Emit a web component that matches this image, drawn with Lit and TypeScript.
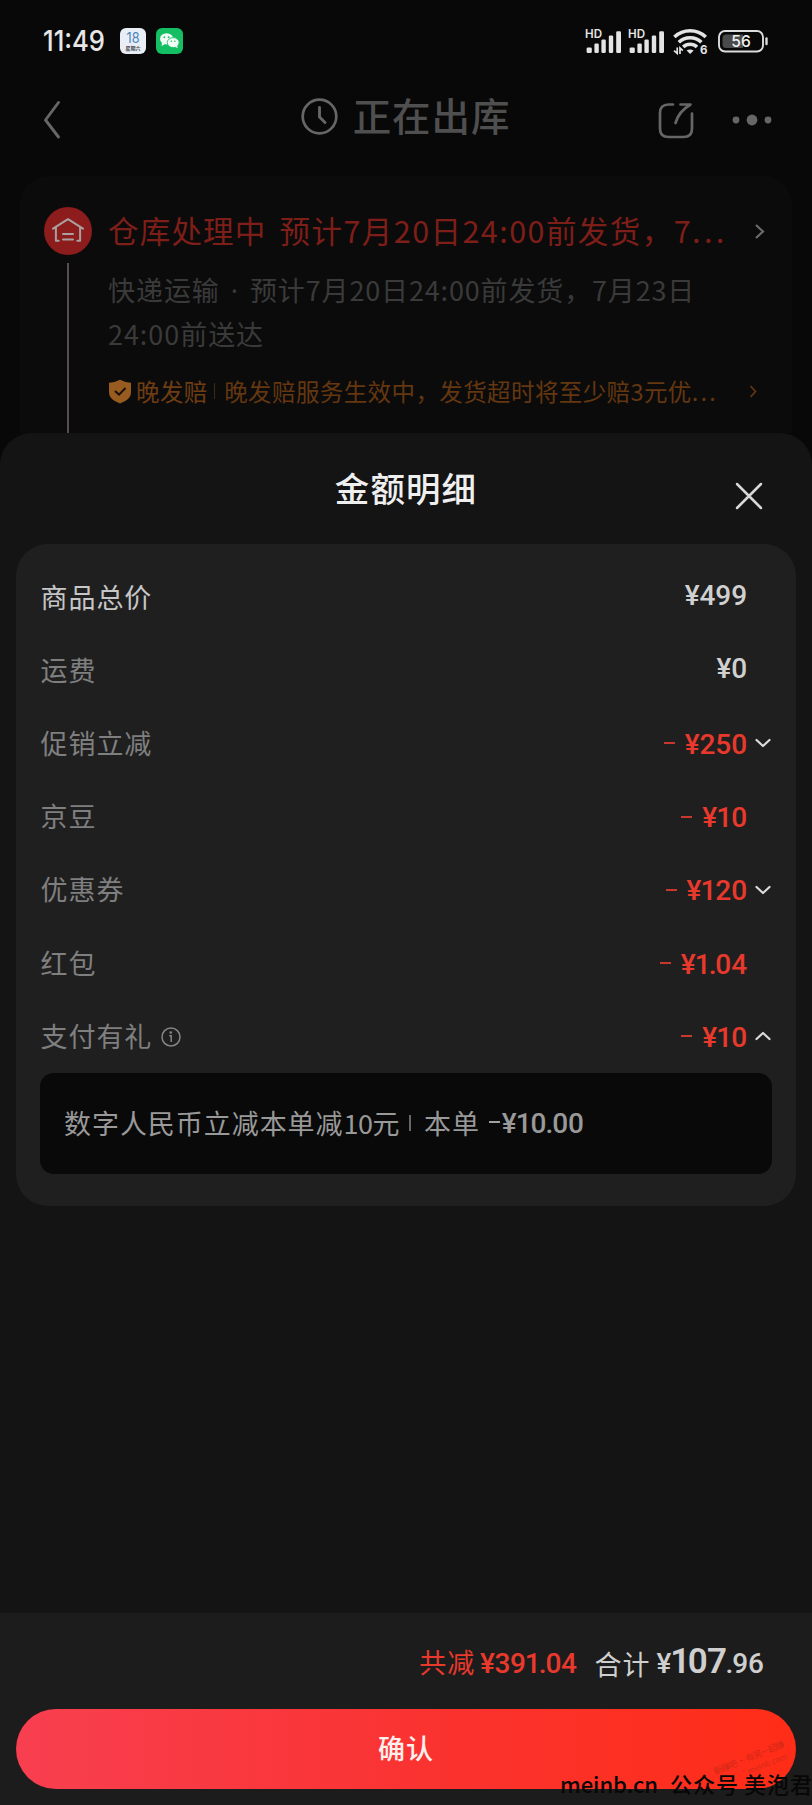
import { LitElement, html, svg, css, nothing } from "lit";
import { customElement, property } from "lit/decorators.js";

interface Row {
  label: string;
  amount: string;
  minus?: boolean;
  chevron?: "down" | "up";
  strong?: boolean;
  info?: boolean;
}

const ROWS: Row[] = [
  { label: "商品总价", amount: "¥499", strong: true },
  { label: "运费", amount: "¥0" },
  { label: "促销立减", amount: "¥250", minus: true, chevron: "down" },
  { label: "京豆", amount: "¥10", minus: true },
  { label: "优惠券", amount: "¥120", minus: true, chevron: "down" },
  { label: "红包", amount: "¥1.04", minus: true },
  { label: "支付有礼", amount: "¥10", minus: true, chevron: "up", info: true },
];

/* Figures with a tightened "1" and decimal point. */
const figures = (value: string) =>
  html`<span>${[...value].map((c) => (c === "1" || c === "." ? html`<span class="thin">${c}</span>` : c))}</span>`;

const figureStyles = css`
  .thin { margin-left: -.800px; letter-spacing: -1.100px; }
`;

const signal = html`<svg class="signal" width="38" height="26" viewBox="0 0 38 26">
  <text x="0" y="10.4" font-size="11.8" font-weight="600" textLength="17" lengthAdjust="spacingAndGlyphs" fill="#e4e4e4">HD</text>
  ${[
    [1.6, 19.4, 5.2],
    [9.4, 15.4, 4.4],
    [16.4, 11.4, 4.4],
    [23.8, 7.4, 4.4],
    [31.2, 3.2, 4.8],
  ].map(([x, y, w]) => svg`<rect x=${x} y=${y} width=${w} height=${25 - y} rx="1.3" fill="#e4e4e4" />`)}
</svg>`;

@customElement("status-bar")
export class StatusBar extends LitElement {
  static styles = css`
    :host { display: flex; height: 82px; box-sizing: border-box; padding: 0 0 0 43px; align-items: center; }
    .time { width: 64px; font-family: "Inter", sans-serif; }
    .apps { display: flex; gap: 10px; margin-left: 13px; flex: 1; }
    .right { display: flex; align-items: center; margin-right: 43px; }
    .signal { margin-right: 5px; font-family: "Inter", sans-serif; }
    .wifi { margin: 0 10px 0 2px; font-family: "Inter", sans-serif; }
    .battery { font-family: "Inter", sans-serif; }
    svg { display: block; overflow: visible; }
  `;
  render() {
    return html`
      <svg class="time" width="64" height="30" viewBox="0 0 64 30"><text x="0" y="25.300" font-size="28.500" font-weight="500" textLength="62" lengthAdjust="spacingAndGlyphs" fill="#e6e6e6">11:49</text></svg>
      <div class="apps">
        <svg width="26" height="26" viewBox="0 0 26 26">
          <rect width="26" height="26" rx="6" fill="#e9eef6" />
          <text x="13" y="15.4" text-anchor="middle" font-family="Inter" font-size="14" fill="#4a83ba" textLength="13" lengthAdjust="spacingAndGlyphs">18</text>
          <text x="13" y="22" text-anchor="middle" font-family="Noto Sans CJK SC" font-weight="700" font-size="5" fill="#45474c">星期六</text>
        </svg>
        <svg width="27" height="26" viewBox="0 0 27 26">
          <rect width="27" height="26" rx="6" fill="#14be62" />
          <ellipse cx="10.6" cy="10.8" rx="6.6" ry="5.6" fill="#f2fbf5" />
          <path d="M6 14.5l-.4 3.4 3.4-2z" fill="#f2fbf5" />
          <ellipse cx="17.2" cy="14.6" rx="5.9" ry="5" fill="#f2fbf5" stroke="#14be62" stroke-width=".8" />
          <path d="M19 18.8l2.6 1.4-.5-2.8z" fill="#f2fbf5" />
          <g fill="#14be62"><circle cx="8.4" cy="9.2" r=".9" /><circle cx="12.6" cy="9.2" r=".9" /><circle cx="15.3" cy="13.2" r=".7" /><circle cx="18.9" cy="13.2" r=".7" /></g>
        </svg>
      </div>
      <div class="right">
        ${signal}${signal}
        <svg class="wifi" width="35" height="27" viewBox="0 0 35 27">
          <g fill="none" stroke="#e4e4e4" stroke-width="3.600">
            <path d="M1.400 9a23 23 0 0 1 31.400 0" /><path d="M5.800 14.200a16.500 16.500 0 0 1 22.600 0" /><path d="M10.200 19a10 10 0 0 1 13.800 0" />
          </g>
          <path d="M13.600 22.600q3.500-2.200 7 0L17.100 26z" fill="#e4e4e4" />
          <path d="M0 26V18h9l1.200 2V26z" fill="#080808" />
          <path d="M4.200 19.500v6L1 22.700M7 26v-6l2.800 2.600" fill="none" stroke="#e4e4e4" stroke-width="1.700" />
          <path d="M25 26v-9.500h9V26z" fill="#080808" />
          <text x="27" y="26" font-size="11.500" font-weight="700" fill="#e4e4e4">6</text>
        </svg>
        <svg class="battery" width="51" height="23" viewBox="0 0 51 23">
          <rect x="1" y="1" width="44" height="20.500" rx="6" fill="none" stroke="#dcdcdc" stroke-width="1.900" />
          <path d="M8 4.500h17v13.500H8q-3.500 0-3.500-3.500V8q0-3.500 3.500-3.500z" fill="#4a4a4a" />
          <path d="M48.500 8.500v5.500" stroke="#dcdcdc" stroke-width="2.400" stroke-linecap="round" />
          <text x="23" y="17.200" text-anchor="middle" font-size="16.500" font-weight="500" textLength="19.500" lengthAdjust="spacingAndGlyphs" fill="#f0f0f0">56</text>
        </svg>
      </div>`;
  }
}

@customElement("order-header")
export class OrderHeader extends LitElement {
  static styles = css`
    :host { display: grid; grid-template-columns: 1fr auto 1fr; height: 94px; box-sizing: border-box; padding: 0 40px 22px 43px; align-items: center; color: #4f4f4f; }
    svg { display: block; fill: none; stroke: #666; }
    .title { display: flex; align-items: center; gap: 15px; font-size: 38.500px; line-height: 50px; font-weight: 500; letter-spacing: .9px; margin: -4px 4px 0 0; }
    .name { margin-top: -4px; }
    .clock { margin-top: 1px; }
    .actions { display: flex; justify-content: flex-end; align-items: center; gap: 38px; margin-top: 4px; }
    .back { margin-top: 4px; }
    .dots { fill: #666; stroke: none; }
  `;
  render() {
    return html`
      <svg class="back" width="18" height="40" viewBox="0 0 18 40"><path d="M15.500 2.500L2.500 20l13 17" stroke-width="2.900" stroke-linecap="round" stroke-linejoin="round" /></svg>
      <div class="title">
        <svg class="clock" width="37" height="37" viewBox="0 0 37 37"><circle cx="18.500" cy="18.500" r="16.800" stroke-width="2.700" /><path d="M18.500 9.500v9.500l5.500 5.500" stroke-width="2.900" stroke-linecap="round" /></svg>
        <span class="name">正在出库</span>
      </div>
      <div class="actions">
        <svg width="36" height="37" viewBox="0 0 36 37"><path d="M15 2.500h-4.500Q2 2.500 2 11v15.500Q2 35 10.500 35h15q8.500 0 8.500-8.500V11.500M22.500 2.500h10M32 3Q21 9 17.500 21" stroke-width="2.700" stroke-linecap="round" /></svg>
        <svg class="dots" width="40" height="12" viewBox="0 0 40 12"><circle cx="4" cy="6" r="3.400" /><circle cx="20" cy="6" r="5.400" /><circle cx="36" cy="6" r="3.400" /></svg>
      </div>`;
  }
}

@customElement("shipping-card")
export class ShippingCard extends LitElement {
  static styles = css`
    :host { display: flex; box-sizing: border-box; height: 257px; margin: 0 20px; padding: 31px 24px 0 24px; background: #0b0b0b; border-radius: 28px 28px 0 0; }
    .track { display: flex; flex-direction: column; align-items: center; width: 48px; margin-right: 16px; }
    .line { width: 1.600px; flex: 1; background: #55504e; margin-top: 8px; }
    .body { flex: 1; }
    svg { display: block; }
    .head { display: flex; justify-content: space-between; height: 46px; padding-bottom: 4px; align-items: center; color: #7e1e19; font-size: 30.500px; letter-spacing: 1.200px; white-space: nowrap; }
    .gap { margin-left: 5px; letter-spacing: 1.450px; }
    .head .dots { letter-spacing: 3.300px; }
    .late .dots { letter-spacing: 2.200px; }
    .desc { margin-top: 11px; color: #3a3a3a; font-size: 27px; line-height: 43px; letter-spacing: .95px; white-space: nowrap; }
    .mid { font-family: "Noto Sans", sans-serif; margin: 0 4px; }
    .eta { letter-spacing: .850px; }
    .late { display: flex; align-items: center; margin-top: 19px; height: 34px; color: #643710; font-size: 23.500px; letter-spacing: .4px; white-space: nowrap; }
    .tag { margin-left: 4px; color: #6f3d14; }
    .bar { width: 1.500px; height: 16px; background: #45290f; margin: 0 9px 0 6px; }
    .late .arrow { margin-left: auto; margin-right: 11px; }
    .head .arrow { margin: 2px 3px 0 0; }
  `;
  render() {
    return html`
      <div class="track">
        <svg width="48" height="48" viewBox="0 0 48 48"><circle cx="24" cy="24" r="24" fill="#8d1c1c" /><path d="M9 21.700L24 12.200 39 21.700M11.900 20.500v13.300h2.800M36.100 20.500v13.300h-2.800M19 27h10M19 32.500h10" fill="none" stroke="#a8a19f" stroke-width="2" stroke-linecap="round" stroke-linejoin="round" /></svg>
        <div class="line"></div>
      </div>
      <div class="body">
        <div class="head"><span>仓库处理中 <span class="gap">预计7月20日24:00前发货，7<span class="dots">...</span></span></span>
          <svg class="arrow" width="11" height="17" viewBox="0 0 11 17"><path d="M2 2l7 6.500L2 15" fill="none" stroke="#6c6c6c" stroke-width="2.200" /></svg></div>
        <div class="desc">快递运输 <span class="mid">·</span> <span class="eta">预计7月20日24:00前发货，7月23日</span><br />24:00前送达</div>
        <div class="late">
          <svg width="24" height="25" viewBox="0 0 24 25"><path d="M12 .8q5 2.700 11 3v10Q23 20.500 12 24.500 1 20.500 1 13.800v-10q6-.3 11-3z" fill="#985c20" /><path d="M7 12l4 3.600L17.500 9" fill="none" stroke="#1b1007" stroke-width="2" /></svg>
          <span class="tag">晚发赔</span><span class="bar"></span><span>晚发赔服务生效中，发货超时将至少赔3元优<span class="dots">...</span></span>
          <svg class="arrow" width="8" height="13" viewBox="0 0 8 13"><path d="M1.500 1l5 5.500-5 5.500" fill="none" stroke="#643710" stroke-width="1.700" /></svg>
        </div>
      </div>`;
  }
}

@customElement("amount-row")
export class AmountRow extends LitElement {
  @property({ attribute: false }) row!: Row;
  static styles = [
    figureStyles,
    css`
      :host { display: flex; height: 73.200px; align-items: center; padding: 0 25px 0 24.500px; }
      .label { flex: 1; display: flex; align-items: center; font-size: 27px; letter-spacing: .95px; color: #7f7f7f; padding-bottom: 2px; }
      .label.strong { color: #c6c6c6; }
      .info { margin: 3px 0 0 9px; }
      svg { display: block; }
      .amount { display: flex; align-items: center; color: #d0d0d0; font: 500 28px/36px "Roboto", sans-serif; letter-spacing: -.1px; padding-bottom: 2px; }
      .amount.red { color: #e8392c; padding: 3px 0 0; }
      .minus { width: 11px; height: 2px; background: #c8382e; margin: 0 10px 3px 0; }
      .toggle { width: 24px; display: flex; justify-content: flex-end; }
    `,
  ];
  render() {
    const r = this.row;
    return html`
      <span class="label ${r.strong ? "strong" : ""}">${r.label}${r.info
        ? html`<svg class="info" width="20" height="20" viewBox="0 0 20 20" fill="none" stroke="#858585" stroke-width="1.500"><circle cx="10" cy="10" r="9" /><path d="M8.200 8.700h2v6.300" /><circle cx="9.800" cy="5.500" r=".6" fill="#858585" /></svg>`
        : nothing}</span>
      <span class="amount ${r.minus ? "red" : ""}">${r.minus ? html`<i class="minus"></i>` : nothing}${figures(r.amount)}</span>
      <span class="toggle">${r.chevron
        ? html`<svg width="16" height="10" viewBox="0 0 16 10"><path d=${r.chevron === "down" ? "M1.500 2L8 8l6.500-6" : "M1.500 8L8 2l6.500 6"} fill="none" stroke="#dcdcdc" stroke-width="2.200" stroke-linecap="round" stroke-linejoin="round" /></svg>`
        : nothing}</span>`;
  }
}

@customElement("app-root")
export class AppRoot extends LitElement {
  static styles = [
    figureStyles,
    css`
      :host { display: flex; flex-direction: column; position: relative; width: 812px; height: 1805px; overflow: hidden; background: #080808; font-family: "Noto Sans CJK SC", sans-serif; }
      .sheet { flex: 1; display: flex; flex-direction: column; background: #141414; border-radius: 32px 32px 0 0; }
      .top { display: grid; grid-template-columns: 1fr auto 1fr; height: 111px; padding: 0 48px; align-items: center; }
      .title { grid-column: 2; margin-top: -3px; font-size: 34.500px; line-height: 48px; font-weight: 500; letter-spacing: 1.100px; color: #efefef; }
      .close { justify-self: end; margin-top: 15px; }
      svg { display: block; overflow: visible; }
      .panel { margin: 0 16px; box-sizing: border-box; height: 662px; padding-top: 16.500px; background: #1f1f1f; border-radius: 32px; }
      .detail { display: flex; align-items: center; box-sizing: border-box; height: 101px; margin: 0 24px; padding: 0 24px 2px; background: #090909; border-radius: 14px; color: #999; font-size: 27px; letter-spacing: .95px; white-space: nowrap; }
      .ten { letter-spacing: -.500px; }
      .sep { width: 1.500px; height: 16px; background: #666; margin: 2px 13px 0 9px; }
      .dash { width: 11px; height: 2px; background: #a0a0a0; margin: 0 2px 0 9px; }
      .num { font: 500 28px/36px "Roboto", sans-serif; letter-spacing: -.2px; }
      .detail .num { padding-top: 4px; }
      .footer { margin-top: auto; height: 192px; background: #1d1c1c; }
      .total { display: flex; justify-content: flex-end; align-items: baseline; box-sizing: border-box; height: 85px; padding: 29px 48px 0 0; border-bottom: 1px solid #191a1a; font-size: 27px; line-height: 40px; letter-spacing: .95px; }
      .cut { color: #e8392c; display: flex; align-items: baseline; gap: 5px; margin-right: 18px; }
      .cut .num { letter-spacing: -.400px; }
      .sum { color: #cfcfcf; display: flex; align-items: baseline; gap: 6px; }
      .sum .num { letter-spacing: 0; }
      .word { position: relative; top: 2px; }
      .big { font-size: 35px; font-weight: 600; letter-spacing: -.800px; }
      .big .thin { margin-left: -1px; letter-spacing: -2.500px; }
      .confirm { display: block; width: 780px; height: 80px; margin: 11px 16px 0; padding: 0 0 3px; border: 0; border-radius: 40px; background: linear-gradient(90deg, #f83f50, #fa322f 55%, #ff2d17); color: #fff0ee; font: 500 27px "Noto Sans CJK SC", sans-serif; letter-spacing: .95px; }
      .mark { position: absolute; right: 0; bottom: 0; font-family: "Noto Sans CJK SC", sans-serif; }
    `,
  ];
  render() {
    return html`
      <status-bar></status-bar>
      <order-header></order-header>
      <shipping-card></shipping-card>
      <section class="sheet">
        <div class="top">
          <div class="title">金额明细</div>
          <svg class="close" width="30" height="30" viewBox="0 0 30 30"><path d="M3 3l24 24M27 3L3 27" stroke="#d8d8d8" stroke-width="2.500" stroke-linecap="round" /></svg>
        </div>
        <div class="panel">
          ${ROWS.map((r) => html`<amount-row .row=${r}></amount-row>`)}
          <div class="detail">数字人民币立减本单减<span class="ten">10</span>元<i class="sep"></i>本单<i class="dash"></i><span class="num">${figures("¥10.00")}</span></div>
        </div>
        <div class="footer">
          <div class="total">
            <span class="cut">共减<span class="num">${figures("¥391.04")}</span></span>
            <span class="sum"><span class="word">合计</span><span class="num">¥<span class="big">${figures("107")}</span>${figures(".96")}</span></span>
          </div>
          <button class="confirm">确认</button>
        </div>
      </section>
      <svg class="mark" width="260" height="75" viewBox="0 0 260 75">
        <g transform="rotate(-22 200 30)" fill="#5a1a10" fill-opacity=".3" font-size="9"><text x="160" y="30" textLength="76">新赚吧 · 有奖一起赚</text><text x="192" y="42" font-size="8">meinb.com</text></g>
        <text x="8" y="62.500" font-size="22" font-weight="500" fill="#070707" textLength="98">meinb.cn</text>
        <text x="118" y="62.500" font-size="22" font-weight="500" fill="#070707" textLength="68">公众号</text>
        <text x="192" y="62.500" font-size="22" font-weight="500" fill="#070707" textLength="68">美泡君</text>
      </svg>`;
  }
}
